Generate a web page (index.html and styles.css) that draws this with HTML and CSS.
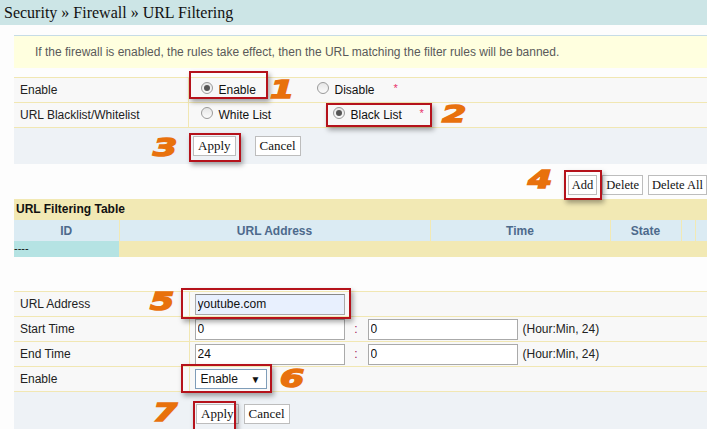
FILE: index.html
```html
<!DOCTYPE html>
<html lang="en">
<head>
    <meta charset="UTF-8">
    <title>URL Filtering</title>
    <link rel="stylesheet" href="styles.css">
</head>
<body>
<div class="page">
    <div class="crumb">Security &raquo; Firewall &raquo; URL Filtering</div>

    <div class="content">
        <div class="note">If the firewall is enabled, the rules take effect, then the URL matching the filter rules will be banned.</div>

        <table class="form form-top">
            <tr>
                <td class="label">Enable</td>
                <td class="field">
                    <div class="choices">
                        <span class="opt opt-first"><span class="radio on"></span>Enable</span>
                        <span class="opt opt-dis"><span class="radio"></span>Disable</span>
                        <span class="star">*</span>
                    </div>
                </td>
            </tr>
            <tr>
                <td class="label">URL Blacklist/Whitelist</td>
                <td class="field">
                    <div class="choices">
                        <span class="opt opt-first"><span class="radio"></span>White List</span>
                        <span class="opt opt-black"><span class="radio on"></span>Black List</span>
                        <span class="star">*</span>
                    </div>
                </td>
            </tr>
        </table>
        <div class="actions actions-top">
            <button class="btn">Apply</button><button class="btn btn-cancel">Cancel</button>
        </div>

        <div class="toolbar">
            <button class="btn">Add</button><button class="btn">Delete</button><button class="btn">Delete All</button>
        </div>

        <div class="table-title">URL Filtering Table</div>
        <table class="list">
            <tr class="list-head">
                <td class="c-id">ID</td>
                <td class="c-url">URL Address</td>
                <td class="c-time">Time</td>
                <td class="c-state">State</td>
                <td class="c-x"></td>
                <td></td>
            </tr>
            <tr class="list-row">
                <td class="empty">----</td>
                <td></td><td></td><td></td><td></td><td></td>
            </tr>
        </table>

        <table class="form form-bottom">
            <tr>
                <td class="label">URL Address</td>
                <td class="field2"><input class="text filled" value="youtube.com"></td>
            </tr>
            <tr>
                <td class="label">Start Time</td>
                <td class="field2"><input class="text" value="0"><span class="colon">:</span><input class="text" value="0"><span class="hint">(Hour:Min, 24)</span></td>
            </tr>
            <tr>
                <td class="label">End Time</td>
                <td class="field2"><input class="text" value="24"><span class="colon">:</span><input class="text" value="0"><span class="hint">(Hour:Min, 24)</span></td>
            </tr>
            <tr>
                <td class="label">Enable</td>
                <td class="field2"><span class="select">Enable<span class="arrow">&#9660;</span></span></td>
            </tr>
        </table>
        <div class="actions actions-bottom">
            <button class="btn">Apply</button><button class="btn btn-cancel2">Cancel</button>
        </div>
    </div>

    <!-- step markers drawn over the page -->
    <div class="mark m1"></div>
    <div class="mark m2"></div>
    <div class="mark m3"></div>
    <div class="mark m4"></div>
    <div class="mark m5"></div>
    <div class="mark m6"></div>
    <div class="mark m7"></div>

    <span class="step s1">1</span>
    <span class="step s2">2</span>
    <span class="step s3">3</span>
    <span class="step s4">4</span>
    <span class="step s5">5</span>
    <span class="step s6">6</span>
    <span class="step s7">7</span>
</div>
</body>
</html>
```

FILE: styles.css
```css
* {
    box-sizing: border-box;
}

body {
    margin: 0;
    background: #fdfdfd;
    font-family: "Liberation Sans", Arial, sans-serif;
    font-size: 12px;
    color: #222;
    overflow: hidden;
}

.page {
    position: relative;
    width: 720px;
    height: 429px;
}

.crumb {
    height: 25px;
    line-height: 26px;
    padding-left: 4px;
    background: #cce5e6;
    font-family: "Liberation Serif", "Times New Roman", serif;
    font-size: 16px;
    color: #111;
}

.content {
    margin-left: 14px;
    width: 700px;
    padding-top: 10px;
}

.note {
    height: 33px;
    line-height: 33px;
    padding-left: 21px;
    border-top: 1px solid #c6dce6;
    background: #ffffdf;
    color: #5a5a5a;
}

.form {
    width: 100%;
    border-collapse: collapse;
    border-top: 1px solid #f1e7b3;
    background: #f8f8f8;
}

.form-top {
    margin-top: 9px;
}

.form td {
    height: 25px;
    padding: 0;
    border-bottom: 1px solid #f1e7b3;
    white-space: nowrap;
}

.form .label {
    width: 175px;
    padding-left: 6px;
    border-right: 1px solid #f1e7b3;
    color: #222;
}

.form-top .label {
    width: 174px;
}

.field {
    padding-left: 12px !important;
}

.choices {
    display: flex;
    align-items: center;
}

.opt {
    display: inline-flex;
    align-items: center;
    font-size: 12px;
    color: #111;
}

.opt-first {
    width: 116px;
}

.opt-dis {
    width: 77px;
}

.opt-black {
    margin-left: 16px;
    width: 87px;
}

.radio {
    display: inline-block;
    width: 12px;
    height: 12px;
    margin-right: 6px;
    margin-top: -4px;
    border: 1px solid #9a9a9a;
    border-radius: 50%;
    background: linear-gradient(#e6e6e6, #fbfbfb);
    position: relative;
}

.radio.on::after {
    content: "";
    position: absolute;
    left: 2px;
    top: 2px;
    width: 6px;
    height: 6px;
    border-radius: 50%;
    background: #555;
}

.star {
    color: #e8306a;
    font-size: 11px;
    margin-top: -4px;
}

.actions {
    background: #eef2f6;
}

.actions-top {
    height: 36px;
    padding: 8px 0 0 179px;
}

.actions-bottom {
    height: 40px;
    padding: 12px 0 0 182px;
}

.btn {
    height: 20px;
    padding: 0 4px;
    border: 1px solid #bdbdbd;
    background: #fff;
    font-family: "Liberation Serif", "Times New Roman", serif;
    font-size: 13px;
    color: #111;
    vertical-align: top;
}

.btn-cancel {
    margin-left: 19px;
}

.btn-cancel2 {
    margin-left: 5px;
}

.toolbar {
    margin-top: 11px;
    height: 24px;
    text-align: right;
    margin-right: 7px;
}

.toolbar .btn {
    margin-left: 5px;
    padding: 0 3px;
    font-size: 12.5px;
}

.table-title {
    height: 21px;
    line-height: 21px;
    padding-left: 2px;
    background: #f2e9b4;
    font-weight: bold;
    color: #111;
}

.list {
    width: 100%;
    border-collapse: collapse;
    table-layout: fixed;
    background: #f2e9b4;
}

.list td {
    padding: 0;
    border-right: 1px solid #f2e9b4;
}

.list-head td {
    height: 21px;
    background: #dbebf3;
    text-align: center;
    font-weight: bold;
    color: #4d6a8c;
}

.c-id { width: 105px; }
.c-url { width: 311px; }
.c-time { width: 180px; }
.c-state { width: 71px; }
.c-x { width: 14px; }

.list-row td {
    height: 16px;
}

.list-row .empty {
    background: #b5e3e3;
    color: #111;
    font-size: 11px;
    line-height: 14px;
    vertical-align: top;
}

.form-bottom {
    margin-top: 34px;
}

.field2 {
    padding-left: 5px !important;
}

.text {
    width: 150px;
    height: 21px;
    padding: 0 2px;
    border: 1px solid #aaa;
    background: #fff;
    font-family: "Liberation Sans", Arial, sans-serif;
    font-size: 12px;
    color: #111;
    vertical-align: middle;
}

.filled {
    background: #e8f0fe;
    border-top-color: #888;
}

.colon {
    display: inline-block;
    width: 23px;
    text-align: center;
    color: #a0205a;
    vertical-align: middle;
}

.hint {
    margin-left: 5px;
    vertical-align: middle;
}

.select {
    display: inline-flex;
    align-items: center;
    width: 72px;
    height: 20px;
    padding-left: 5px;
    border: 1px solid #7f9db9;
    background: #fff;
    font-size: 12px;
    color: #111;
    vertical-align: middle;
}

.arrow {
    margin-left: auto;
    margin-right: 5px;
    font-size: 10px;
}

/* annotation overlays */
.mark {
    position: absolute;
    border: 2px solid #b5121b;
    box-shadow: 2px 3px 5px rgba(0, 0, 0, 0.35);
}

.m1 { left: 189px; top: 71px; width: 79px; height: 28px; }
.m2 { left: 326px; top: 103px; width: 106px; height: 24px; }
.m3 { left: 189px; top: 133px; width: 52px; height: 29px; }
.m4 { left: 564px; top: 170px; width: 38px; height: 30px; }
.m5 { left: 181px; top: 288px; width: 170px; height: 31px; }
.m6 { left: 181px; top: 364px; width: 91px; height: 29px; }
.m7 { left: 193px; top: 401px; width: 43px; height: 32px; }

.step {
    position: absolute;
    font-family: "DejaVu Sans", sans-serif;
    font-weight: bold;
    font-style: italic;
    font-size: 24px;
    line-height: 1;
    color: #e8710d;
    -webkit-text-stroke: 1.5px #e8710d;
    transform: scaleX(1.45);
    transform-origin: left top;
}

.s1 { left: 270px; top: 78px; }
.s2 { left: 442px; top: 103px; transform: scale(1.45, 0.95); }
.s3 { left: 153px; top: 136px; }
.s4 { left: 528px; top: 168px; }
.s5 { left: 150px; top: 290px; }
.s6 { left: 280px; top: 367px; }
.s7 { left: 153px; top: 401px; }
```
